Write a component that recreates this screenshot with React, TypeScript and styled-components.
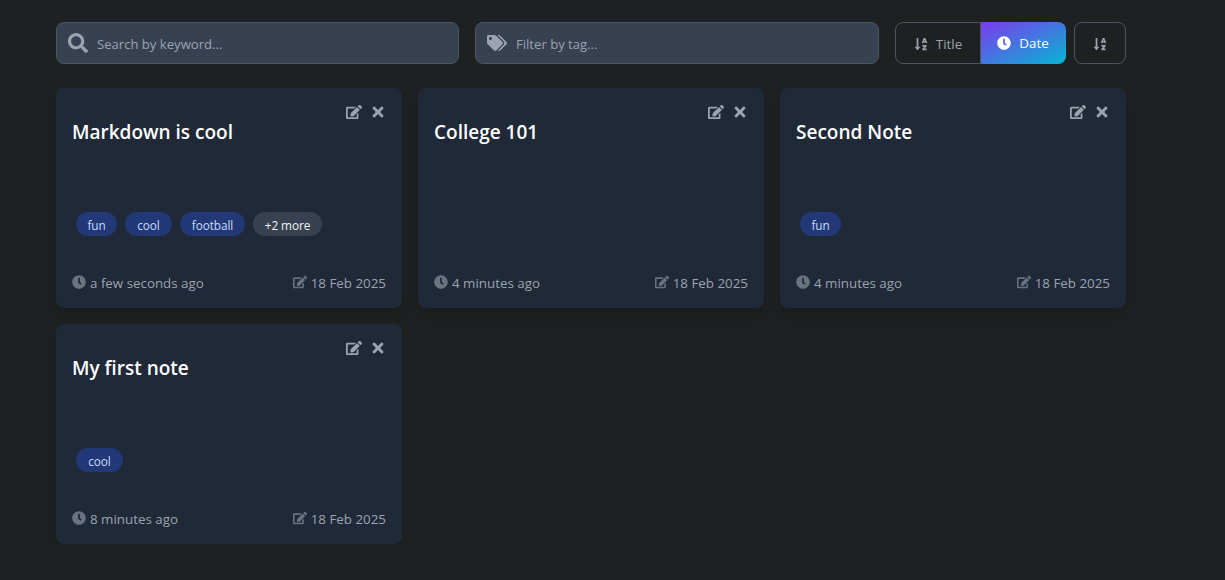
import React from "react";
import styled, { createGlobalStyle, css } from "styled-components";
import { FaClock, FaEdit, FaSearch, FaSortAlphaDown, FaTags, FaTimes } from "react-icons/fa";

const GlobalStyle = createGlobalStyle`
  * { box-sizing: border-box; }
  body {
    margin: 0;
    background: #1e2121;
    font-family: "Segoe UI", "Open Sans", "Noto Sans", sans-serif;
  }
  svg { display: block; flex: none; }
`;

const Page = styled.main`
  width: 1070px;
  margin-left: 56px;
  padding-top: 22px;
`;

const Toolbar = styled.div`
  display: grid;
  grid-template-columns: 403px 404px auto;
  gap: 16px;
  height: 42px;
  margin-bottom: 24px;
`;

const Field = styled.label`
  display: flex;
  align-items: center;
  gap: 9px;
  padding: 0 11px;
  background: #374151;
  border: 1px solid #4b5563;
  border-radius: 8px;
  color: #9ca3af;
`;

const Input = styled.input`
  flex: 1;
  min-width: 0;
  padding: 2px 0 0;
  border: 0;
  outline: 0;
  background: none;
  color: #fff;
  font-family: inherit;
  font-size: 13.1px;
  &::placeholder { color: #9ca3af; opacity: 1; }
`;

const SortControls = styled.div`
  display: flex;
  gap: 8px;
`;

const ButtonGroup = styled.div`
  display: flex;
`;

const Button = styled.button<{ $w: number; $shape: "left" | "right" | "full"; $active?: boolean }>`
  display: flex;
  align-items: center;
  justify-content: center;
  gap: 8px;
  width: ${(p) => p.$w}px;
  padding: 2px 0 0;
  border: 1px solid #4b5563;
  border-radius: ${(p) => ({ left: "8px 0 0 8px", right: "0 8px 8px 0", full: "8px" })[p.$shape]};
  background: transparent;
  color: #9ca3af;
  font-family: inherit;
  font-size: 13.4px;
  ${(p) =>
    p.$active &&
    css`
      border: 0;
      padding: 2px 1px 2px 0;
      background: linear-gradient(to bottom right, #7c3aed, #06b6d4);
      color: #fff;
    `}
`;

const Grid = styled.div`
  display: grid;
  grid-template-columns: repeat(3, 346px);
  gap: 16px;
`;

const CardBox = styled.article`
  display: flex;
  flex-direction: column;
  height: 220px;
  padding: 16px 16px 15px;
  border-radius: 8px;
  background: #1f2937;
  box-shadow: 0 10px 15px -3px rgba(0, 0, 0, 0.1), 0 4px 6px -4px rgba(0, 0, 0, 0.1);
`;

const Actions = styled.div`
  display: flex;
  justify-content: flex-end;
  gap: 8px;
  height: 16px;
  color: #9ca3af;
`;

const Title = styled.h2`
  margin: -2px 0 0;
  color: #fff;
  font-size: 19px;
  font-weight: 600;
  line-height: 28px;
`;

const Tags = styled.div`
  display: flex;
  flex: none;
  gap: 8px;
  height: 24px;
  margin: 66px 4px 0;
`;

const Tag = styled.span<{ $w: number; $more?: boolean }>`
  width: ${(p) => p.$w}px;
  padding-top: 1px;
  border-radius: 12px;
  text-align: center;
  white-space: nowrap;
  background: ${(p) => (p.$more ? "#374151" : "#233876")};
  color: ${(p) => (p.$more ? "#f3f4f6" : "#c3ddfd")};
  font-size: 11.8px;
  letter-spacing: -0.1px;
  line-height: 24px;
`;

const Footer = styled.div`
  display: flex;
  justify-content: space-between;
  margin-top: 37px;
`;

const Meta = styled.span`
  display: flex;
  gap: 4px;
  color: #9ca3af;
  font-size: 13.35px;
  line-height: 20px;
  svg { color: #6b7280; margin-top: 2px; }
`;

type TagName = "fun" | "cool" | "football";
type Note = { title: string; tags: TagName[]; more?: number; ago: string };

const tagWidths: Record<TagName, number> = { fun: 41, cool: 47, football: 65 };

const notes: Note[] = [
  { title: "Markdown is cool", tags: ["fun", "cool", "football"], more: 2, ago: "a few seconds ago" },
  { title: "College 101", tags: [], ago: "4 minutes ago" },
  { title: "Second Note", tags: ["fun"], ago: "4 minutes ago" },
  { title: "My first note", tags: ["cool"], ago: "8 minutes ago" },
];

function NoteCard({ note }: { note: Note }) {
  return (
    <CardBox>
      <Actions>
        <FaEdit size={16} />
        <FaTimes size={16} />
      </Actions>
      <Title>{note.title}</Title>
      <Tags>
        {note.tags.map((t) => (
          <Tag key={t} $w={tagWidths[t]}>{t}</Tag>
        ))}
        {note.more && <Tag $w={69} $more>+{note.more} more</Tag>}
      </Tags>
      <Footer>
        <Meta>
          <FaClock size={14} />
          {note.ago}
        </Meta>
        <Meta>
          <FaEdit size={14} />
          18 Feb 2025
        </Meta>
      </Footer>
    </CardBox>
  );
}

export default function App() {
  return (
    <>
      <GlobalStyle />
      <Page>
        <Toolbar>
          <Field>
            <FaSearch size={20} />
            <Input placeholder="Search by keyword..." />
          </Field>
          <Field>
            <FaTags size={20} />
            <Input placeholder="Filter by tag..." />
          </Field>
          <SortControls>
            <ButtonGroup>
              <Button $w={86} $shape="left">
                <FaSortAlphaDown size={14} />
                Title
              </Button>
              <Button $w={85} $shape="right" $active>
                <FaClock size={14} />
                Date
              </Button>
            </ButtonGroup>
            <Button $w={52} $shape="full">
              <FaSortAlphaDown size={14} />
            </Button>
          </SortControls>
        </Toolbar>
        <Grid>
          {notes.map((n) => (
            <NoteCard key={n.title} note={n} />
          ))}
        </Grid>
      </Page>
    </>
  );
}
